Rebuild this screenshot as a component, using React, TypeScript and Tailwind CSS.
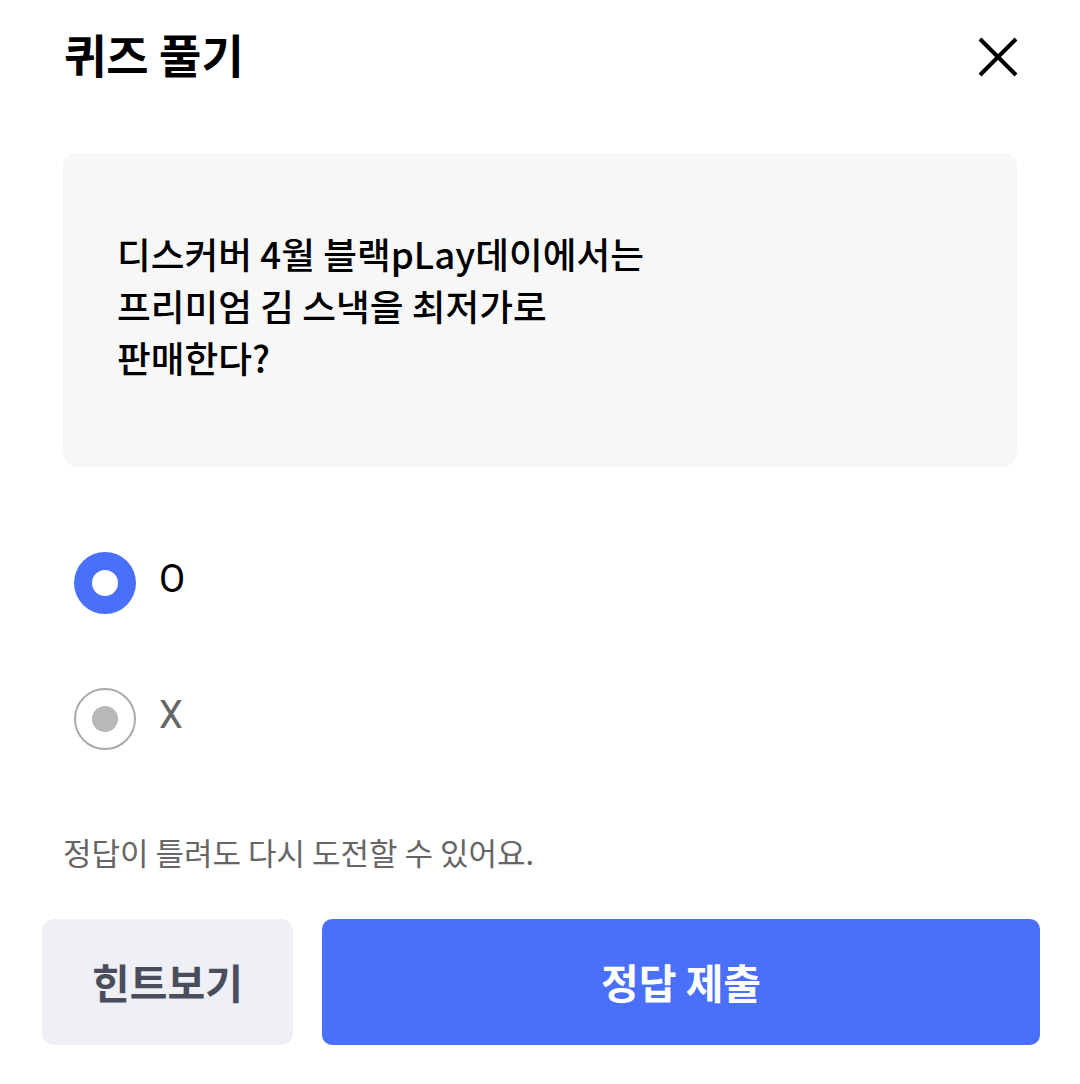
import { useState } from 'react';

const font = { fontFamily: '"Noto Sans CJK KR", "Noto Sans", sans-serif' };

export default function App() {
  const [answer, setAnswer] = useState<'O' | 'X'>('O');

  return (
    <div className="w-[1080px] h-[1084px] bg-white flex flex-col" style={font}>
      {/* Header */}
      <div className="flex items-center justify-between pl-[64px] pr-[60px] h-[116px]">
        <h1 className="text-[46px] font-bold text-black leading-none -mt-[10px]">퀴즈 풀기</h1>
        <button className="w-[44px] h-[44px] flex items-center justify-center -mt-[2px]">
          <svg width="40" height="40" viewBox="0 0 40 40" fill="none">
            <path d="M2 2 L38 38 M38 2 L2 38" stroke="black" strokeWidth="4" />
          </svg>
        </button>
      </div>

      {/* Question card */}
      <div className="mx-[63px] mt-[37px] h-[314px] rounded-[14px] bg-[#f7f7f7] pl-[54px] pt-[74px]">
        <p className="text-[36.7px] font-medium text-black leading-[52px]">
          디스커버 4월 블랙pLay데이에서는
          <br />
          프리미엄 김 스낵을 최저가로
          <br />
          판매한다?
        </p>
      </div>

      {/* Options */}
      <div className="flex flex-col pl-[74px] mt-[85px] gap-[74px]">
        {(['O', 'X'] as const).map((opt) => (
          <button key={opt} onClick={() => setAnswer(opt)} className="flex items-center gap-[23px]">
            {answer === opt ? (
              <span className="w-[62px] h-[62px] rounded-full bg-[#4a6ff8] flex items-center justify-center">
                <span className="w-[26px] h-[26px] rounded-full bg-white" />
              </span>
            ) : (
              <span className="w-[62px] h-[62px] rounded-full border-2 border-[#aaaaaa] flex items-center justify-center">
                <span className="w-[26px] h-[26px] rounded-full bg-[#b8b8b8]" />
              </span>
            )}
            <span
              className={`text-[38px] leading-none -mt-[8px] ${answer === opt ? 'text-black' : 'text-[#666666]'}`}
              style={{ fontFamily: 'Roboto, sans-serif' }}
            >
              {opt}
            </span>
          </button>
        ))}
      </div>

      {/* Helper */}
      <p className="pl-[63px] mt-[86px] text-[31px] text-[#666666] leading-none">정답이 틀려도 다시 도전할 수 있어요.</p>

      {/* Actions */}
      <div className="flex gap-[29px] pl-[42px] pr-[40px] mt-[52px]">
        <button className="w-[251px] h-[126px] rounded-[12px] bg-[#eff0f5] text-[41px] font-bold text-[#4a4e5c]">힌트보기</button>
        <button className="flex-1 h-[126px] rounded-[10px] bg-[#4a6ffb] text-[41px] font-bold text-white">정답 제출</button>
      </div>
    </div>
  );
}
